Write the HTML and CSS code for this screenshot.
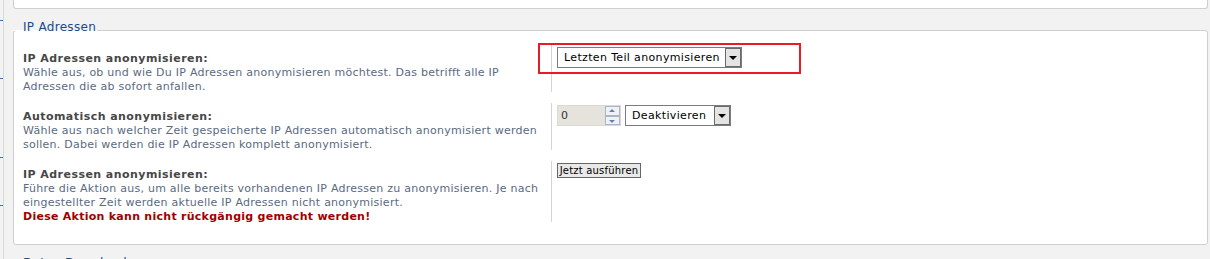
FILE: index.html
```html
<!DOCTYPE html>
<html lang="de">
<head>
  <meta charset="UTF-8" />
  <title>IP Adressen</title>
  <link rel="stylesheet" href="styles.css">
</head>
<body>
  <div class="edge">
    <span class="tick"></span>
    <span class="tick"></span>
    <span class="tick"></span>
    <span class="tick"></span>
  </div>

  <div class="page">
    <div class="box box-prev"></div>

    <h2 class="section-title">IP Adressen</h2>
    <div class="box">
      <div class="row">
        <div class="row-label">
          <strong>IP Adressen anonymisieren:</strong>
          <p>Wähle aus, ob und wie Du IP Adressen anonymisieren möchtest. Das betrifft alle IP Adressen die ab sofort anfallen.</p>
        </div>
        <div class="row-field">
          <span class="highlight"></span>
          <div class="select select-mode">
            <span class="select-text">Letzten Teil anonymisieren</span>
            <span class="select-arrow"></span>
          </div>
        </div>
      </div>

      <div class="row">
        <div class="row-label">
          <strong>Automatisch anonymisieren:</strong>
          <p>Wähle aus nach welcher Zeit gespeicherte IP Adressen automatisch anonymisiert werden sollen. Dabei werden die IP Adressen komplett anonymisiert.</p>
        </div>
        <div class="row-field">
          <div class="number">
            <span class="number-value">0</span>
            <span class="spinner">
              <span class="spin spin-up"></span>
              <span class="spin spin-down"></span>
            </span>
          </div>
          <div class="select select-time">
            <span class="select-text">Deaktivieren</span>
            <span class="select-arrow"></span>
          </div>
        </div>
      </div>

      <div class="row">
        <div class="row-label">
          <strong>IP Adressen anonymisieren:</strong>
          <p>Führe die Aktion aus, um alle bereits vorhandenen IP Adressen zu anonymisieren. Je nach eingestellter Zeit werden aktuelle IP Adressen nicht anonymisiert.</p>
          <strong class="warning">Diese Aktion kann nicht rückgängig gemacht werden!</strong>
        </div>
        <div class="row-field">
          <button class="btn">Jetzt ausführen</button>
        </div>
      </div>
    </div>

    <h2 class="section-title">Daten Download</h2>
  </div>
</body>
</html>
```

FILE: styles.css
```css
body {
  margin: 0;
  display: flex;
  background-color: #f2f2f2;
  font-family: "DejaVu Sans", Verdana, sans-serif;
  font-size: 11px;
  line-height: 14px;
  overflow: hidden;
}

.edge {
  width: 3px;
  border-right: 1px solid #dadada;
  display: flex;
  flex-direction: column;
}

.tick {
  height: 1px;
  background-color: #3b70b3;
}

.tick:nth-child(1) { margin-top: 20px; }
.tick:nth-child(2) { margin-top: 57px; }
.tick:nth-child(3) { margin-top: 78px; }
.tick:nth-child(4) { margin-top: 47px; }

.page {
  flex: 1;
  padding: 0 2px 0 9px;
}

.box {
  background-color: #fff;
  border: 1px solid #cfcfcf;
  border-radius: 3px;
  padding: 14px 0 22px 9px;
}

.box-prev {
  height: 9px;
  padding: 0;
  border-top: none;
  border-radius: 0 0 3px 3px;
  box-sizing: border-box;
}

.section-title {
  position: relative;
  width: fit-content;
  margin: 0 0 -1px 0;
  padding: 16px 1px 0 10px;
  font-size: 12px;
  font-weight: normal;
  line-height: 5px;
  letter-spacing: 0.3px;
  color: #1a4a8a;
  border-bottom: 1px solid #fff;
}

.row {
  display: flex;
}

.row + .row {
  margin-top: 11px;
}

.row-label {
  width: 528px;
  box-sizing: border-box;
  padding-top: 7px;
  margin-bottom: -2px;
  letter-spacing: 0.25px;
}

.row-label strong {
  display: block;
  color: #474747;
  letter-spacing: 0.45px;
}

.row-label p {
  margin: 0;
  color: #5a6a7f;
}

.row-label .warning {
  color: #a10000;
  letter-spacing: 0.27px;
}

.row-field {
  position: relative;
  display: flex;
  align-items: flex-start;
  gap: 4px;
  padding: 2px 0 0 5px;
  border-left: 1px solid #d4d4d4;
}

.highlight {
  position: absolute;
  left: -14px;
  top: -2px;
  width: 263px;
  height: 31px;
  box-sizing: border-box;
  border: 2px solid #e41d26;
}

.select {
  display: flex;
  align-items: center;
  height: 21px;
  box-sizing: border-box;
  border: 1px solid #7c7c7c;
  background-color: #fff;
  font-size: 11px;
  letter-spacing: 0.35px;
  color: #000;
}

.select-mode {
  width: 185px;
}

.select-time {
  width: 106px;
}

.select-text {
  flex: 1;
  padding-left: 6px;
  white-space: nowrap;
}

.select-arrow {
  position: relative;
  width: 16px;
  height: 19px;
  box-sizing: border-box;
  border: 1px solid #6a6a6a;
  background-color: #e4e4e4;
}

.select-arrow::after {
  content: "";
  position: absolute;
  left: 3px;
  top: 7px;
  border-left: 4px solid transparent;
  border-right: 4px solid transparent;
  border-top: 4px solid #000;
}

.number {
  display: flex;
  width: 64px;
  height: 21px;
  box-sizing: border-box;
  border: 1px solid #dcd8d2;
  background-color: #e6e2dc;
  color: #333;
}

.number-value {
  flex: 1;
  padding: 3px 0 0 3px;
}

.spinner {
  display: flex;
  flex-direction: column;
  width: 15px;
}

.spin {
  position: relative;
  flex: 1;
  border: 1px solid #aab5c7;
  background-color: #eef2f7;
}

.spin::after {
  content: "";
  position: absolute;
  left: 3px;
  border-left: 3px solid transparent;
  border-right: 3px solid transparent;
}

.spin-up::after {
  top: 2px;
  border-bottom: 3px solid #6b7fa2;
}

.spin-down::after {
  top: 3px;
  border-top: 3px solid #6b7fa2;
}

.btn {
  height: 15px;
  width: 84px;
  padding: 0;
  border: 1px solid #666;
  background-color: #e9e9e9;
  font-family: "DejaVu Sans", Verdana, sans-serif;
  font-size: 10px;
  line-height: 12px;
  letter-spacing: 0.2px;
  color: #000;
}
```
